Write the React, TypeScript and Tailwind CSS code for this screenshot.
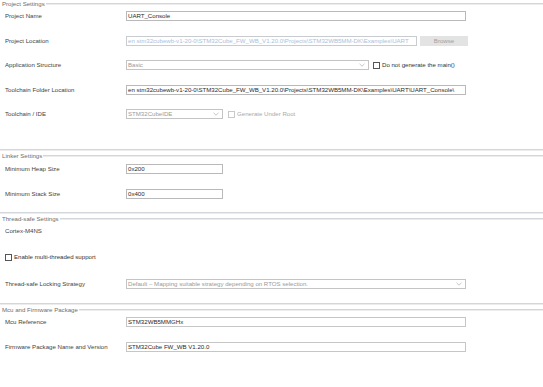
import type { ReactNode } from "react";

const FONT = { fontFamily: '"Liberation Sans", Arial, sans-serif' };

function GroupHeader({ title, className = "" }: { title: string; className?: string }) {
  return (
    <div className={`flex h-[8px] items-center ${className}`}>
      <span className="pl-[2px] pr-[1px] leading-none text-[#6e6e6e]">{title}</span>
      <div className="h-[2px] flex-1 border-t border-[#d3d7dc] bg-[#ececec]" />
    </div>
  );
}

function GroupEnd({ className = "" }: { className?: string }) {
  return <div className={`h-[2px] border-t border-[#d3d7dc] bg-[#ececec] ${className}`} />;
}

function Row({ label, className = "", children }: { label?: string; className?: string; children?: ReactNode }) {
  return (
    <div className={`flex h-[10px] items-center ${className}`}>
      <div className="w-[126px] shrink-0 pl-[5px] leading-none text-[#3f3f3f]">{label}</div>
      {children}
    </div>
  );
}

function Field({ value, width, tone = "text-[#2b2b2b]", border = "border-[#b9b9b9]" }: { value: string; width: string; tone?: string; border?: string }) {
  return (
    <div className={`flex h-[10px] ${width} items-center overflow-hidden whitespace-nowrap border bg-white pl-[1px] leading-none ${border} ${tone}`}>
      {value}
    </div>
  );
}

function Select({ value, width }: { value: string; width: string }) {
  return (
    <div className={`flex h-[10px] ${width} items-center justify-between overflow-hidden whitespace-nowrap border border-[#c4c4c4] bg-white pl-[1px] pr-[3px] leading-none text-[#9a9a9a]`}>
      <span>{value}</span>
      <svg width="6" height="4" viewBox="0 0 6 4" className="shrink-0">
        <path d="M0.5 0.8 L3 3.2 L5.5 0.8" fill="none" stroke="#b8b8b8" strokeWidth="0.8" />
      </svg>
    </div>
  );
}

function Check({ label, disabled = false }: { label: string; disabled?: boolean }) {
  return (
    <div className="flex items-center gap-[2px] leading-none">
      <div className={`h-[7px] w-[7px] border bg-white ${disabled ? "border-[#c9c9c9] bg-[#f2f2f2]" : "border-[#555]"}`} />
      <span className={disabled ? "text-[#a9a9a9]" : "text-[#333]"}>{label}</span>
    </div>
  );
}

export default function App() {
  return (
    <div className="h-[387px] w-[543px] overflow-hidden bg-white text-[6.1px]" style={FONT}>
      {/* Project Settings */}
      <GroupHeader title="Project Settings" />
      <Row label="Project Name" className="mt-[3px]">
        <Field value="UART_Console" width="w-[340px]" />
      </Row>
      <Row label="Project Location" className="mt-[15px]">
        <Field
          value="en stm32cubewb-v1-20-0\STM32Cube_FW_WB_V1.20.0\Projects\STM32WB5MM-DK\Examples\UART"
          width="w-[291px]"
          tone="text-[#a9c1da]"
          border="border-[#c8ccd0]"
        />
        <div className="ml-[3px] flex h-[10px] w-[48px] items-center justify-center bg-[#e3e3e3] leading-none text-[#a0a0a0]">
          Browse
        </div>
      </Row>
      <Row label="Application Structure" className="mt-[14px]">
        <Select value="Basic" width="w-[243px]" />
        <div className="ml-[4px]">
          <Check label="Do not generate the main()" />
        </div>
      </Row>
      <Row label="Toolchain Folder Location" className="mt-[15px]">
        <Field
          value="en stm32cubewb-v1-20-0\STM32Cube_FW_WB_V1.20.0\Projects\STM32WB5MM-DK\Examples\UART\UART_Console\"
          width="w-[340px]"
        />
      </Row>
      <Row label="Toolchain / IDE" className="mt-[14px]">
        <Select value="STM32CubeIDE" width="w-[97px]" />
        <div className="ml-[5px]">
          <Check label="Generate Under Root" disabled />
        </div>
      </Row>
      <GroupEnd className="mt-[30px]" />

      {/* Linker Settings */}
      <GroupHeader title="Linker Settings" className="mt-[1px]" />
      <Row label="Minimum Heap Size" className="mt-[4px]">
        <Field value="0x200" width="w-[97px]" />
      </Row>
      <Row label="Minimum Stack Size" className="mt-[15px]">
        <Field value="0x400" width="w-[97px]" />
      </Row>
      <GroupEnd className="mt-[13px]" />

      {/* Thread-safe Settings */}
      <GroupHeader title="Thread-safe Settings" className="mt-[1px]" />
      <Row label="Cortex-M4NS" className="mt-[3px]" />
      <div className="mt-[16px] flex h-[10px] items-center pl-[5px]">
        <Check label="Enable multi-threaded support" />
      </div>
      <Row label="Thread-safe Locking Strategy" className="mt-[17px]">
        <Select value="Default – Mapping suitable strategy depending on RTOS selection." width="w-[340px]" />
      </Row>
      <GroupEnd className="mt-[14px]" />

      {/* Mcu and Firmware Package */}
      <GroupHeader title="Mcu and Firmware Package" className="mt-[1px]" />
      <Row label="Mcu Reference" className="mt-[3px]">
        <Field value="STM32WB5MMGHx" width="w-[340px]" border="border-[#c6c6c6]" />
      </Row>
      <Row label="Firmware Package Name and Version" className="mt-[15px]">
        <Field value="STM32Cube FW_WB V1.20.0" width="w-[340px]" border="border-[#c6c6c6]" />
      </Row>
    </div>
  );
}
